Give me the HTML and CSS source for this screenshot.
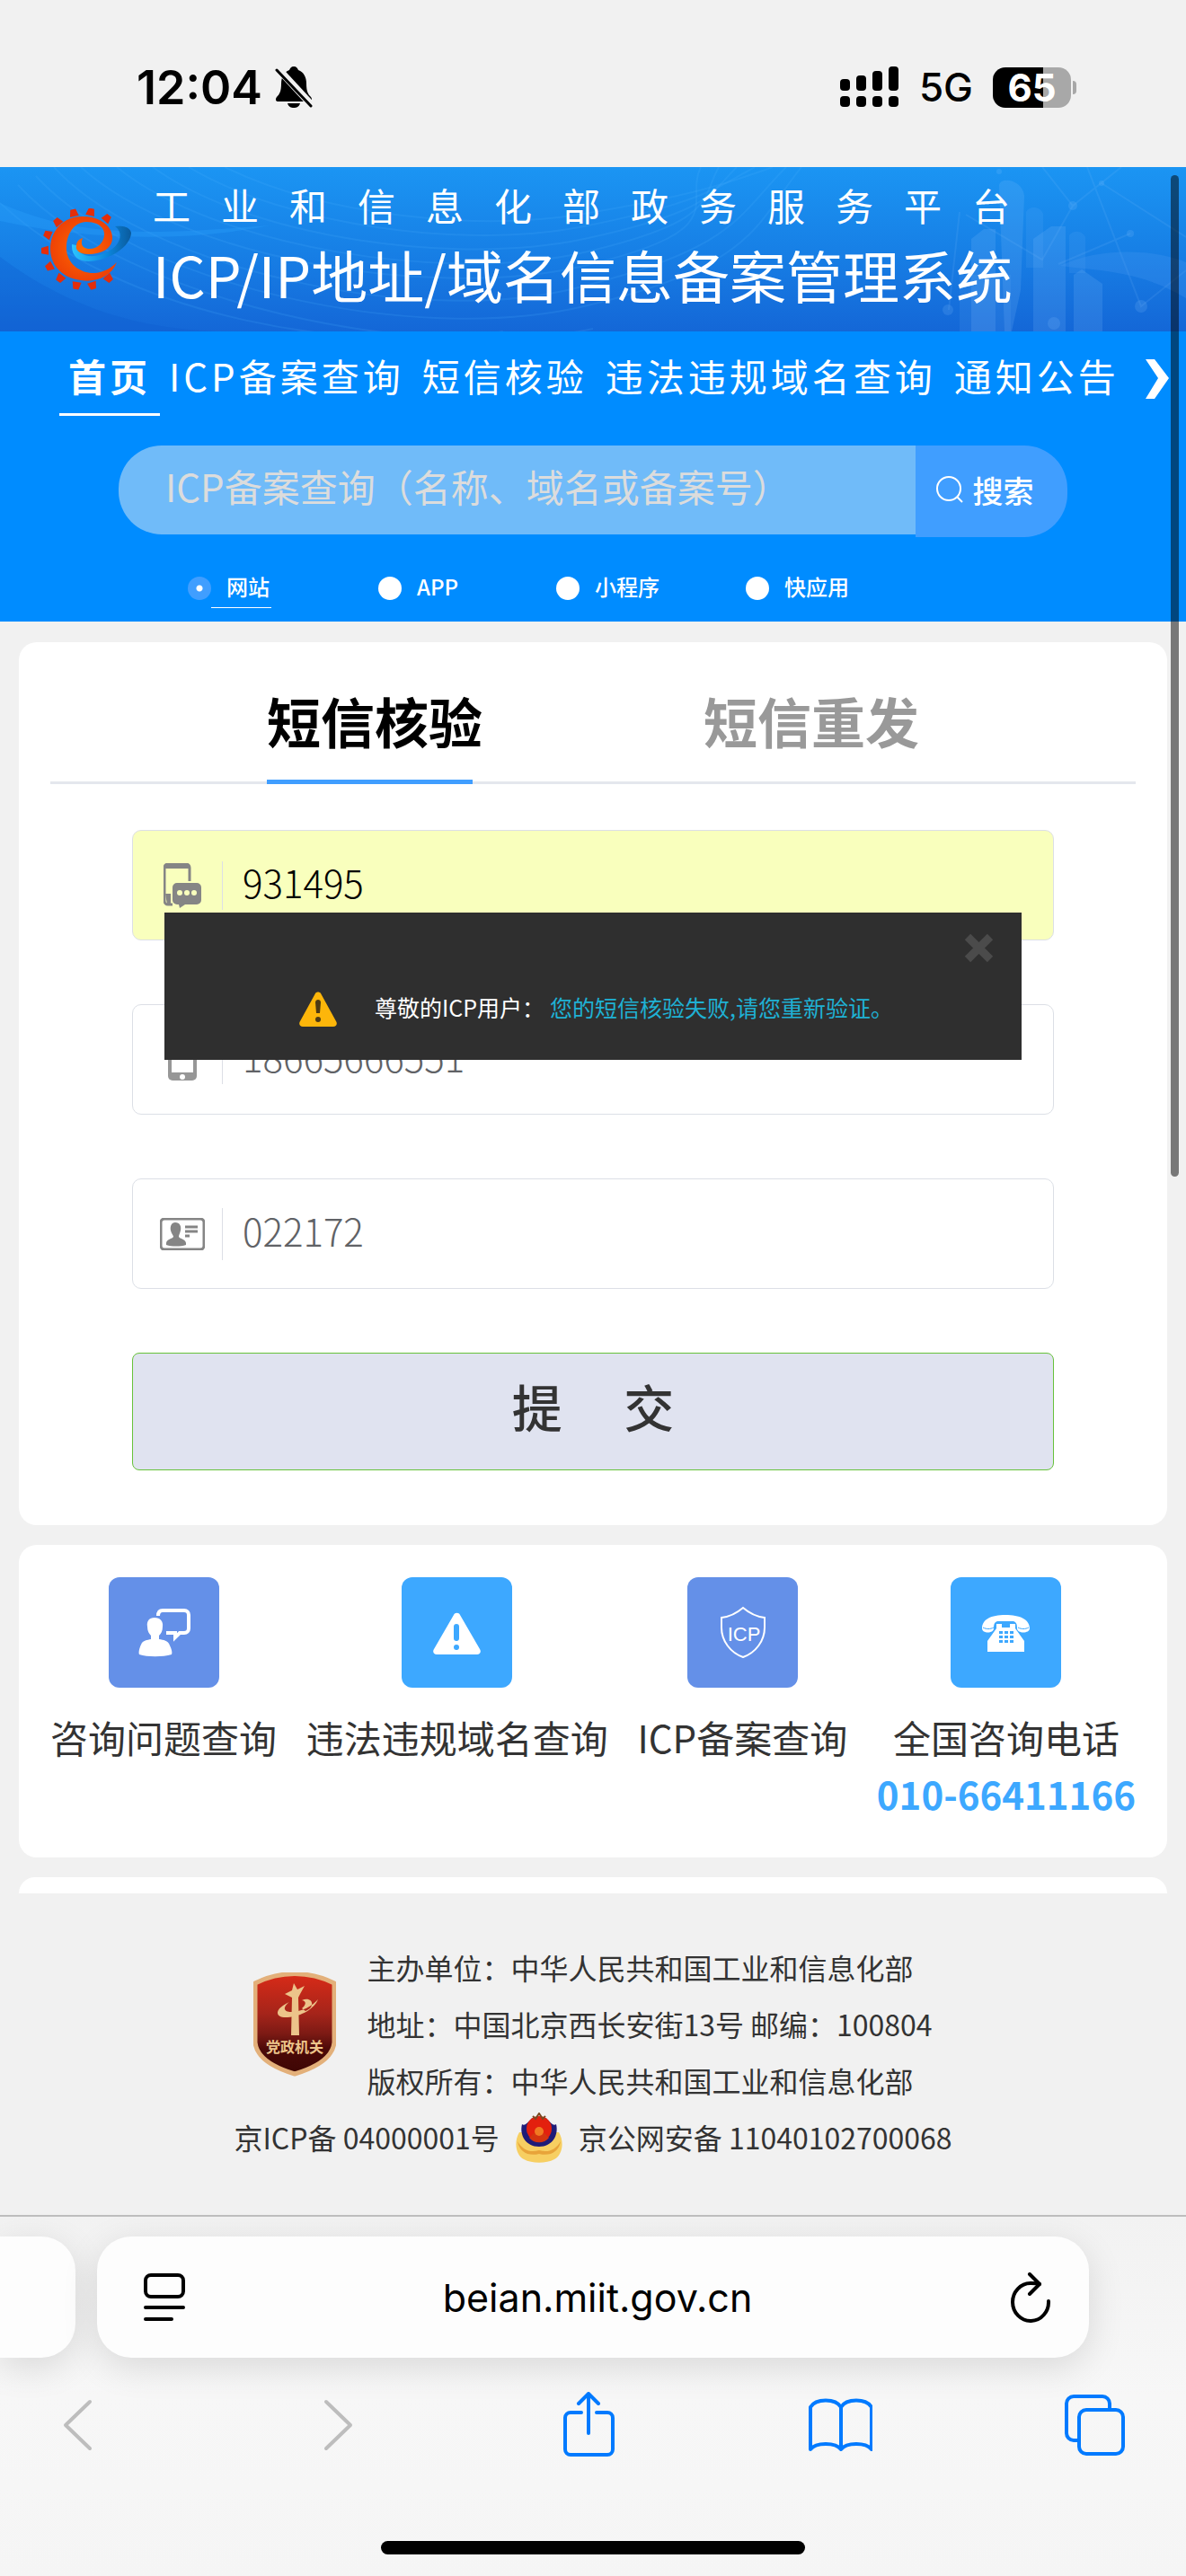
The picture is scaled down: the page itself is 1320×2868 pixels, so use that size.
FILE: index.html
```html
<!DOCTYPE html>
<html lang="zh-CN">
<head>
  <meta charset="UTF-8">
  <meta name="viewport" content="width=device-width, initial-scale=1.0">
  <title>ICP/IP地址/域名信息备案管理系统</title>
  <link rel="stylesheet" href="styles.css">
</head>
<body>
<div class="status-bar">
  <div class="status-left">
    <span class="clock">12:04</span>
    <svg class="bell" width="42" height="48" viewBox="0 0 42 48">
      <path d="M21 1c3 0 4 2 5 4 6 2 9 8 9 15 0 9 2 12 5 15 2 3 1 5-2 5H4c-3 0-4-2-2-5 3-3 5-6 5-15 0-7 3-13 9-15 1-2 2-4 5-4zM14 42h14c-1 4-4 5-7 5s-6-1-7-5z"/>
      <path d="M3 3l38 41" stroke="#f1f1f1" stroke-width="8"/>
      <path d="M2 5l38 40" stroke="#000" stroke-width="3" stroke-linecap="round"/>
    </svg>
  </div>
  <div class="status-right">
    <svg width="66" height="46" viewBox="0 0 66 46">
      <rect x="0" y="14" width="11" height="13" rx="4"/>
      <rect x="18" y="10" width="11" height="17" rx="4"/>
      <rect x="36" y="5" width="11" height="22" rx="4"/>
      <rect x="54" y="0" width="11" height="27" rx="4"/>
      <rect x="0" y="33" width="11" height="12" rx="4"/>
      <rect x="18" y="33" width="11" height="12" rx="4"/>
      <rect x="36" y="33" width="11" height="12" rx="4"/>
      <rect x="54" y="33" width="11" height="12" rx="4"/>
    </svg>
    <span class="network">5G</span>
    <div class="battery"><span>65</span></div>
  </div>
</div>

<header class="site-header">
  <svg class="header-bg" viewBox="0 0 1320 183" preserveAspectRatio="none">
    <g fill="none" stroke="#4fb4ff" stroke-opacity="0.16" stroke-width="2">
      <path d="M90 0c110 100 390 150 560 110s110-70 130-110"/>
      <path d="M130 0c110 90 370 130 520 95s130-60 150-95"/>
      <path d="M170 0c110 80 340 110 480 80s140-50 170-80"/>
      <path d="M210 0c110 66 310 92 440 66s150-44 190-66"/>
      <path d="M250 0c110 54 280 72 400 52s160-34 210-52"/>
      <path d="M60 0c100 110 400 180 580 135s180-80 235-135"/>
      <path d="M40 10c110 120 420 190 610 145s190-90 242-155"/>
      <path d="M20 20c120 130 450 200 640 160"/>
      <path d="M0 40c140 130 400 170 560 143"/>
    </g>
    <path d="M0 40c90 40 170 35 300 25C200 85 90 80 0 60z" fill="#2ba0fb" fill-opacity="0.35"/>
    <path d="M0 100c80 60 160 80 240 83H0z" fill="#0c56cc" fill-opacity="0.25"/>
    <g fill="#8cc8ff" fill-opacity="0.16">
      <path d="M1112 20c2-10 26-6 28 12l-4 105-10 46h-8z"/>
      <path d="M1150 80l20-14h16v117h-36z"/>
      <path d="M1081 80l14-11h13v114h-27z"/>
      <path d="M1195 120l9-6 23 16v53h-32z"/>
      <path d="M1142 50c4-8 16-6 19 2v60h-19z" fill-opacity="0.1"/>
      <path d="M1190 76c4-6 14-6 18 2v40h-18z" fill-opacity="0.1"/>
      <path d="M1068 120h57v63h-57z" fill-opacity="0.1"/>
      <circle cx="1194" cy="43" r="5"/>
      <circle cx="1258" cy="74" r="4"/>
      <circle cx="1270" cy="155" r="7"/>
      <circle cx="1055" cy="159" r="6"/>
      <circle cx="1173" cy="174" r="7"/>
      <circle cx="1226" cy="18" r="3"/>
      <circle cx="1112" cy="5" r="3"/>
    </g>
    <path d="M1160 0l34 43 54-43M1194 43l-34 60-85-50M1210 0l60 155 50-40M1258 74l-80 34M1226 18l94 60M1068 50l-12 109" fill="none" stroke="#8cc8ff" stroke-opacity="0.12" stroke-width="2"/>
    <path d="M1180 110c40-20 100-20 140-4v40c-50-30-90-30-140-36z" fill="#4a9cf5" fill-opacity="0.25"/>
  </svg>
  <svg class="logo" width="100" height="92" viewBox="0 0 100 92">
    <defs>
      <linearGradient id="swoosh" x1="0" x2="1">
        <stop offset="0" stop-color="#2cc4ff"/>
        <stop offset="0.6" stop-color="#0b86dd"/>
        <stop offset="1" stop-color="#0a5a9c"/>
      </linearGradient>
      <radialGradient id="ring">
        <stop offset="0" stop-color="#ff6a00"/>
        <stop offset="1" stop-color="#ee4206"/>
      </radialGradient>
      <path id="tooth" d="M-3-4h6l2 8H-5z"/>
    </defs>
    <g fill="#e32d0a">
      <use href="#tooth" transform="translate(36 5) rotate(-12)"/>
      <use href="#tooth" transform="translate(55 4) rotate(14)"/>
      <use href="#tooth" transform="translate(73 11) rotate(40)"/>
      <use href="#tooth" transform="translate(18 15) rotate(-41)"/>
      <use href="#tooth" transform="translate(7 29) rotate(-67)"/>
      <use href="#tooth" transform="translate(4 47) rotate(-92)"/>
      <use href="#tooth" transform="translate(9 65) rotate(-119)"/>
      <use href="#tooth" transform="translate(21 78) rotate(-143)"/>
      <use href="#tooth" transform="translate(39 86) rotate(-171)"/>
      <use href="#tooth" transform="translate(57 86) rotate(163)"/>
      <use href="#tooth" transform="translate(75 78) rotate(138)"/>
    </g>
    <path fill="url(#swoosh)" d="M34 40C33 58 48 62 66 57c24-7 34-21 34-30-2-7-10-8-18-7 10 7 6 20-6 27-14 9-34 9-37-6z"/>
    <path fill="url(#ring)" d="M84 60C78 76 60 83 44 80 20 77 10 60 10 45 10 25 24 9 46 9c20 0 33 11 33 24 0 11-11 18-27 18-10 0-14-5-13-9 0-5 3-8 7-9-2 5-2 11 6 12 10 1 18-7 18-16 0-10-10-14-20-14-14 0-23 15-22 31 1 16 16 27 32 26 10-1 18-6 24-12z"/>
  </svg>
  <div class="site-title">
    <p>工业和信息化部政务服务平台</p>
    <h1>ICP/IP地址/域名信息备案管理系统</h1>
  </div>
</header>

<section class="top-panel">
  <nav class="main-nav">
    <a href="#" class="active">首页</a>
    <a href="#">ICP备案查询</a>
    <a href="#">短信核验</a>
    <a href="#">违法违规域名查询</a>
    <a href="#">通知公告</a>
    <button type="button" class="nav-next" aria-label="更多">
      <svg width="26" height="44" viewBox="0 0 26 44"><path d="M0 0h10l16 21-16 23H0l14-23z" fill="#fff"/></svg>
    </button>
  </nav>

  <form class="search">
    <input type="text" aria-label="ICP备案查询" placeholder="ICP备案查询（名称、域名或备案号）">
    <button type="button">
      <svg width="32" height="32" viewBox="0 0 32 32" fill="none" stroke="#fff" stroke-width="2"><circle cx="15" cy="15" r="13"/><path d="M24 24l6 6"/></svg>
      搜索
    </button>
  </form>

  <div class="kinds">
    <label class="kind"><input type="radio" name="kind" checked><span>网站</span></label>
    <label class="kind"><input type="radio" name="kind"><span>APP</span></label>
    <label class="kind"><input type="radio" name="kind"><span>小程序</span></label>
    <label class="kind"><input type="radio" name="kind"><span>快应用</span></label>
  </div>
</section>

<main>
  <section class="card verify">
    <div class="tabs">
      <button type="button" class="tab active">短信核验</button>
      <button type="button" class="tab">短信重发</button>
    </div>
    <form class="verify-form">
      <div class="field autofill">
        <label for="smsCode" aria-label="短信验证码">
          <svg width="42" height="50" viewBox="0 0 42 50">
            <path d="M10 46H5a4 4 0 0 1-4-4V5a4 4 0 0 1 4-4h20a4 4 0 0 1 4 4v15" fill="none" stroke="#858585" stroke-width="3"/>
            <path d="M2 1h26v5H2zM2 34h6v12H4z" fill="#858585"/>
            <path d="M15 22h22a5 5 0 0 1 5 5v14a5 5 0 0 1-5 5H24l-6 4-1-4h-2a5 5 0 0 1-5-5V27a5 5 0 0 1 5-5z" fill="#858585"/>
            <circle cx="18" cy="33" r="3" fill="#f9ffbd"/><circle cx="26" cy="33" r="3" fill="#f9ffbd"/><circle cx="34" cy="33" r="3" fill="#f9ffbd"/>
          </svg>
        </label>
        <input type="text" id="smsCode" value="931495">
      </div>
      <div class="field">
        <label for="phone" aria-label="手机号码">
          <svg width="42" height="50" viewBox="0 0 42 50">
            <rect x="5" y="2" width="32" height="46" rx="5" fill="#979797"/>
            <path d="M9 8h24v31H9z" fill="#fff"/>
            <circle cx="21" cy="44" r="3" fill="#fff"/>
          </svg>
        </label>
        <input type="text" id="phone" value="18665666551">
      </div>
      <div class="field">
        <label for="idCard" aria-label="证件号码">
          <svg class="id-icon" width="50" height="36" viewBox="0 0 50 36">
            <rect x="1" y="1" width="48" height="34" rx="4" fill="none" stroke="#858585" stroke-width="3"/>
            <path d="M17 5c5 0 7 4 6 9-1 4-2 5-2 7 1 2 8 3 8 7v2c-6 2-16 2-22 0v-2c0-4 7-5 8-7 0-2-2-3-3-7-1-5 1-9 5-9z" fill="#858585"/>
            <path d="M28 10h14M28 15h14M28 20h5" stroke="#858585" stroke-width="3"/>
          </svg>
        </label>
        <input type="text" id="idCard" value="022172">
      </div>
      <button type="submit" class="submit">提&emsp;&nbsp;交</button>
    </form>

    <div class="toast" role="alert">
      <button type="button" class="toast-close" aria-label="关闭">
        <svg width="35" height="35" viewBox="0 0 35 35"><path d="M5 5l25 25M30 5L5 30" stroke="#4b4b4b" stroke-width="9"/></svg>
      </button>
      <div class="toast-body">
        <svg width="42" height="39" viewBox="0 0 42 39">
          <path d="M18 2c1-2 5-2 6 0l17 31c2 3 0 6-3 6H4c-3 0-5-3-3-6z" fill="#fdb60a"/>
          <path d="M18 12c0-4 6-4 6 0l-1 12h-4z" fill="#4d3a14"/>
          <circle cx="21" cy="31" r="3" fill="#4d3a14"/>
        </svg>
        <p>尊敬的ICP用户：<span>您的短信核验失败,请您重新验证。</span></p>
      </div>
    </div>
  </section>

  <section class="card links">
    <a href="#" class="quick">
      <span class="tile tile-purple">
        <svg width="123" height="123" viewBox="0 0 123 123">
          <path d="M51 45c6 0 10 4 9 10 0 5-2 8-4 10v4c5 1 10 1 12 7 2 4 3 8 2 10-10 3-27 3-36 0-1-2 0-7 2-11 2-5 7-5 11-6v-4c-2-2-4-5-4-10-1-6 2-10 8-10z" fill="#fff"/>
          <path d="M55 43c0-4 2-6 5-6h24c3 0 5 2 5 5v15c0 3-2 5-5 5h-5l-5 5v-5H64" fill="none" stroke="#fff" stroke-width="4"/>
        </svg>
      </span>
      <span class="quick-name">咨询问题查询</span>
    </a>
    <a href="#" class="quick">
      <span class="tile tile-blue">
        <svg width="123" height="123" viewBox="0 0 123 123">
          <path d="M58 42c1-3 6-3 7 0l22 38c2 3 0 6-3 6H39c-3 0-5-3-3-6z" fill="#fff"/>
          <path d="M61 55v13" stroke="#3da8ff" stroke-width="6" stroke-linecap="round"/>
          <circle cx="61" cy="78" r="3" fill="#3da8ff"/>
        </svg>
      </span>
      <span class="quick-name">违法违规域名查询</span>
    </a>
    <a href="#" class="quick">
      <span class="tile tile-purple">
        <svg width="123" height="123" viewBox="0 0 123 123">
          <path d="M62 34c7 6 15 10 24 11v11c0 15-10 28-24 33-14-5-24-18-24-33V45c9-1 17-5 24-11z" fill="none" stroke="#fff" stroke-width="2"/>
          <text x="63" y="71" text-anchor="middle" class="shield-label">ICP</text>
        </svg>
      </span>
      <span class="quick-name">ICP备案查询</span>
    </a>
    <a href="#" class="quick">
      <span class="tile tile-blue">
        <svg width="123" height="123" viewBox="0 0 123 123">
          <path d="M35 57c0-10 10-15 26-15s27 5 27 15c0 6-14 6-14 0 0-5-1-7-4-8H52c-3 1-4 3-4 8 0 6-13 6-13 0z" fill="#fff"/>
          <path d="M51 52h6v4h9v-4h6v5l10 14v12H41V71l10-14z" fill="#fff"/>
          <path d="M54 60h4v3h-4zM60 60h4v3h-4zM66 60h4v3h-4zM54 65h4v3h-4zM60 65h4v3h-4zM66 65h4v3h-4zM54 70h4v3h-4zM60 70h4v3h-4zM66 70h4v3h-4z" fill="#3da8ff"/>
          <path d="M36 56c4 2 8 2 12 0M75 56c4 2 8 2 12 0" stroke="#3da8ff" fill="none"/>
        </svg>
      </span>
      <span class="quick-name">全国咨询电话</span>
      <strong>010-66411166</strong>
    </a>
  </section>

  <section class="card card-peek"></section>
</main>

<footer class="site-footer">
  <div class="footer-main">
    <svg width="92" height="116" viewBox="0 0 92 116">
      <defs>
        <linearGradient id="shield" x2="0" y2="1">
          <stop offset="0" stop-color="#d92b18"/>
          <stop offset="0.4" stop-color="#a5241a"/>
          <stop offset="0.6" stop-color="#7c1a14"/>
          <stop offset="0.75" stop-color="#4c0a08"/>
          <stop offset="1" stop-color="#3d0604"/>
        </linearGradient>
      </defs>
      <path d="M2 12C30-2 62-2 90 12v66c-2 18-24 29-44 35C26 107 4 96 2 78z" fill="url(#shield)" stroke="#e3b07a" stroke-width="5"/>
      <path d="M45 12l4 7 8-4-5 9-2 4 1 42h-9l1-42-8-4 8-4z" fill="#ecc48a"/>
      <path d="M54 40c4-3 6-8 0-9 12-5 16 8 4 12M40 33c-18 8-16 18-2 17 16-1 30-10 34-20-6 7-18 14-30 14-8 0-10-5-2-11z" fill="#ecc48a"/>
      <text x="46" y="89" text-anchor="middle" class="shield-text">党政机关</text>
    </svg>
    <div class="footer-lines">
      <p>主办单位：中华人民共和国工业和信息化部</p>
      <p>地址：中国北京西长安街13号 邮编：100804</p>
      <p>版权所有：中华人民共和国工业和信息化部</p>
    </div>
  </div>
  <div class="footer-record">
    <a href="#">京ICP备 04000001号</a>
    <svg width="54" height="56" viewBox="0 0 54 56">
      <path d="M5 22c-7 12-3 26 5 30 9 5 25 5 34 0 8-4 12-18 5-30z" fill="#f7cf62"/>
      <path d="M3 32c6 10 14 13 24 10 10 3 18 0 24-10-2 12-12 17-24 14C15 49 5 44 3 32z" fill="#e8a43a"/>
      <path d="M8 13c4 3 8-5 12-7h14c4 2 8 10 12 7 3 12-4 25-19 25S5 25 8 13z" fill="#1f1c78"/>
      <circle cx="27" cy="18" r="14" fill="#e3200e"/>
      <path d="M16 28l5-5 6 3 6-3 5 5c-5 7-17 7-22 0z" fill="#d4340f"/>
      <circle cx="27" cy="21" r="5" fill="#f07a22"/>
      <path d="M20 4l3 3 4-6 4 6 3-3" stroke="#7a4a22" stroke-width="2" fill="none"/>
    </svg>
    <a href="#">京公网安备 11040102700068</a>
  </div>
</footer>

<div class="browser-bar">
  <div class="address-row">
    <div class="pill pill-prev"></div>
    <div class="pill pill-main">
      <button type="button" aria-label="页面设置">
        <svg width="46" height="54" viewBox="0 0 46 54" fill="none" stroke="#000" stroke-width="4" stroke-linecap="round"><rect x="2" y="2" width="42" height="24" rx="6"/><path d="M2 38h42M2 51h29"/></svg>
      </button>
      <span class="address">beian.miit.gov.cn</span>
      <button type="button" aria-label="刷新">
        <svg width="46" height="56" viewBox="0 0 46 56" fill="none" stroke="#000" stroke-width="4" stroke-linecap="round" stroke-linejoin="round"><path d="M43 32a20 21 0 1 1-20-20c4 0 7 0 10 1"/><path d="M22 2l11 11-11 11"/></svg>
      </button>
    </div>
  </div>
  <div class="tool-row">
    <button type="button" aria-label="后退"><svg width="72" height="72" viewBox="0 0 72 72" stroke="#bdbdbd"><path d="M50 11L23 37l27 26"/></svg></button>
    <button type="button" aria-label="前进"><svg width="72" height="72" viewBox="0 0 72 72" stroke="#bdbdbd"><path d="M30 11l27 26-27 26"/></svg></button>
    <button type="button" aria-label="分享"><svg width="72" height="72" viewBox="0 0 72 72" stroke="#007aff"><path d="M31 23H19a6 6 0 0 0-6 6v35a6 6 0 0 0 6 6h41a6 6 0 0 0 6-6V29a6 6 0 0 0-6-6H48M39 46V3M28 13L39 2l11 11"/></svg></button>
    <button type="button" aria-label="书签"><svg width="72" height="72" viewBox="0 0 72 72" stroke="#007aff"><path d="M37 17C31 7 9 7 3 17v47c6-8 28-8 34 0 6-8 28-8 34 0V17C65 7 43 7 37 17zM37 17v47"/></svg></button>
    <button type="button" aria-label="标签页"><svg width="72" height="72" viewBox="0 0 72 72" stroke="#007aff"><rect x="19" y="20" width="49" height="49" rx="8"/><path d="M19 54h-6a8 8 0 0 1-8-8V13a8 8 0 0 1 8-8h32a8 8 0 0 1 8 8v7"/></svg></button>
  </div>
  <div class="home-indicator"></div>
</div>

<div class="page-scrollbar"></div>
</body>
</html>
```
FILE: styles.css
```css
* {
  box-sizing: border-box;
}

body {
  margin: 0;
  position: relative;
  background: #f1f1f1;
  color: #333;
  font-family: "Noto Sans CJK SC", "Noto Sans", sans-serif;
}

p, h1 {
  margin: 0;
  font-weight: 400;
}

a {
  color: inherit;
  text-decoration: none;
}

button {
  padding: 0;
  border: none;
  background: none;
  font-family: inherit;
  cursor: pointer;
}

svg {
  display: block;
  flex: none;
}

/* phone status bar */
.status-bar {
  display: flex;
  justify-content: space-between;
  align-items: center;
  height: 186px;
  padding: 8px 128px 0 152px;
  color: #000;
  font-family: Inter, sans-serif;
}

.status-left,
.status-right {
  display: flex;
  align-items: center;
}

.clock {
  margin-right: 14px;
  font-size: 52px;
  font-weight: 600;
}

.network {
  margin: 0 22px;
  font-size: 44px;
  font-weight: 500;
}

.battery {
  position: relative;
  width: 87px;
  height: 45px;
  border-radius: 14px;
  background: linear-gradient(to right, #000 64%, #a8a8a8 64%);
  color: #fff;
  font-size: 42px;
  font-weight: 700;
  line-height: 45px;
  text-align: center;
}

.battery::after {
  content: "";
  position: absolute;
  top: 15px;
  right: -6px;
  width: 4px;
  height: 15px;
  border-radius: 0 4px 4px 0;
  background: #a8a8a8;
}

/* header */
.site-header {
  position: relative;
  display: flex;
  align-items: center;
  gap: 24px;
  height: 183px;
  padding-left: 46px;
  background: linear-gradient(#1b95f3, #1780e6 50%, #1467d7);
  color: #fff;
}

.header-bg {
  position: absolute;
  top: 0;
  left: 0;
  width: 100%;
  height: 100%;
}

.logo,
.site-title {
  position: relative;
}

.site-title {
  padding-bottom: 10px;
}

.site-title p {
  font-size: 42px;
  line-height: 64px;
  letter-spacing: 34px;
  white-space: nowrap;
}

.site-title h1 {
  font-size: 63px;
  line-height: 90px;
  white-space: nowrap;
}

.top-panel {
  padding: 19px 0 15px;
  background: #008cff;
  color: #fff;
}

.main-nav {
  display: flex;
  padding-left: 66px;
}

.main-nav a {
  padding: 0 10px 12px;
  font-size: 42px;
  line-height: 60px;
  letter-spacing: 4px;
  white-space: nowrap;
}

.main-nav a.active {
  border-bottom: 3px solid #fff;
  font-weight: 700;
}

.nav-next {
  margin-left: 19px;
  height: 68px;
}

.search {
  display: flex;
  align-items: flex-start;
  margin: 33px 132px 0;
}

.search input {
  flex: 1;
  min-width: 0;
  height: 99px;
  padding: 0 0 10px 52px;
  border: none;
  border-radius: 48px 0 0 48px;
  background: #70bbf9;
  font-family: inherit;
  font-size: 42px;
}

.search input::placeholder {
  color: #dcdcdc;
  opacity: 1;
}

.search button {
  display: flex;
  justify-content: center;
  align-items: center;
  gap: 10px;
  width: 169px;
  height: 102px;
  padding: 0 16px 4px 0;
  border-radius: 0 48px 48px 0;
  background: #409eff;
  color: #fff;
  font-size: 34px;
  font-weight: 500;
}

.kinds {
  display: grid;
  grid-template-columns: 212px 198px 211px auto;
  margin-top: 38px;
  padding-left: 209px;
}

.kind {
  display: flex;
  font-size: 24px;
  font-weight: 500;
  line-height: 34px;
}

.kind span {
  padding: 0 2px 6px 17px;
  border-bottom: 1px solid transparent;
}

.kind input {
  appearance: none;
  width: 26px;
  height: 26px;
  margin: 6px 0 0;
  border-radius: 50%;
  background: #fff;
}

.kind input:checked {
  background: radial-gradient(#fff 3px, #409eff 4px);
}

.kind input:checked + span {
  border-color: #fff;
}

/* cards */
.card {
  position: relative;
  margin: 0 21px 22px;
  border-radius: 20px;
  background: #fff;
}

main {
  padding-top: 23px;
}

.tabs {
  display: flex;
  gap: 246px;
  margin: 0 35px;
  padding: 47px 0 0 241px;
  border-bottom: 3px solid #e4e7ed;
}

.tab {
  position: relative;
  padding-bottom: 28px;
  color: #999;
  font-size: 60px;
  font-weight: 700;
  line-height: 80px;
}

.tab.active {
  color: #000;
}

.tab.active::after {
  content: "";
  position: absolute;
  left: 0;
  right: 11px;
  bottom: -3px;
  height: 5px;
  background: #409eff;
}

.verify-form {
  display: flex;
  flex-direction: column;
  gap: 71px;
  padding: 51px 126px 61px;
}

.field {
  display: flex;
  align-items: center;
  height: 123px;
  padding-left: 34px;
  border: 1px solid #dcdfe6;
  border-radius: 10px;
}

.field.autofill {
  background: #f9ffbd;
}

.field label {
  width: 66px;
  padding: 2px 0;
  border-right: 1px solid #dcdfe6;
}

.field .id-icon {
  margin: 9px 0 9px -4px;
}

.field input {
  flex: 1;
  min-width: 0;
  height: 68px;
  padding: 0 22px 8px;
  border: none;
  background: none;
  color: #606266;
  font-family: inherit;
  font-size: 42px;
  font-weight: 300;
}

.field.autofill input {
  color: #000;
}

.submit {
  height: 131px;
  padding-bottom: 14px;
  border: 1px solid #67c23a;
  border-radius: 8px;
  background: #e0e3f0;
  color: #333;
  font-size: 56px;
  font-weight: 500;
}

.toast {
  position: absolute;
  top: 301px;
  left: 162px;
  right: 162px;
  height: 164px;
  background: #2f2f2f;
}

.toast-close {
  position: absolute;
  top: 22px;
  right: 30px;
}

.toast-body {
  display: flex;
  align-items: center;
  gap: 42px;
  padding: 87px 0 0 150px;
  color: #fff;
  font-size: 25px;
  line-height: 36px;
}

.toast-body p {
  padding-bottom: 4px;
}

.toast-body span {
  margin-left: 6px;
  color: #1fb1d4;
}

.links {
  display: flex;
  justify-content: space-between;
  padding: 36px 35px 40px;
}

.quick {
  display: flex;
  flex-direction: column;
  align-items: center;
  font-size: 42px;
  line-height: 63px;
}

.tile {
  margin-bottom: 23px;
  border-radius: 12px;
}

.tile-purple {
  background: #6490e8;
}

.tile-blue {
  background: #3da8ff;
}

.shield-label {
  fill: #fff;
  font-family: "Liberation Sans", sans-serif;
  font-size: 22px;
}

.quick strong {
  color: #3da8ff;
}

.card-peek {
  height: 18px;
  margin-bottom: 0;
  border-radius: 20px 20px 0 0;
}

/* footer */
.site-footer {
  padding: 51px 0 55px;
  font-size: 32px;
  line-height: 63px;
}

.footer-main {
  display: flex;
  justify-content: center;
  align-items: center;
  gap: 34px;
}

.shield-text {
  fill: #ecc48a;
  font-size: 16px;
  font-weight: 700;
}

.footer-record {
  display: flex;
  justify-content: center;
  align-items: center;
  gap: 17px;
}

/* browser toolbar */
.browser-bar {
  padding-bottom: 24px;
  border-top: 2px solid #bdbdbd;
  background: linear-gradient(#f2f2f2, #f7f7f7 50%, #f5f5f5);
  overflow: hidden;
}

.address-row {
  display: flex;
  gap: 24px;
  padding: 22px 108px 0 0;
}

.pill {
  height: 135px;
  background: #fdfdfd;
  box-shadow: 0 10px 40px rgba(0, 0, 0, 0.12);
}

.pill-prev {
  width: 84px;
  border-radius: 0 38px 38px 0;
}

.pill-main {
  flex: 1;
  display: flex;
  justify-content: space-between;
  align-items: center;
  padding: 0 42px 0 52px;
  border-radius: 38px;
}

.address {
  color: #000;
  font-family: Inter, sans-serif;
  font-size: 43px;
}

.tool-row {
  display: flex;
  justify-content: space-between;
  padding: 38px 66px 0 50px;
}

.tool-row svg {
  fill: none;
  stroke-width: 4;
  stroke-linecap: round;
  stroke-linejoin: round;
}

.home-indicator {
  width: 472px;
  height: 15px;
  margin: 94px auto 0;
  border-radius: 8px;
  background: #000;
}

.page-scrollbar {
  position: absolute;
  top: 195px;
  right: 8px;
  width: 9px;
  height: 1115px;
  border-radius: 5px;
  background: rgba(0, 0, 0, 0.5);
}
```
